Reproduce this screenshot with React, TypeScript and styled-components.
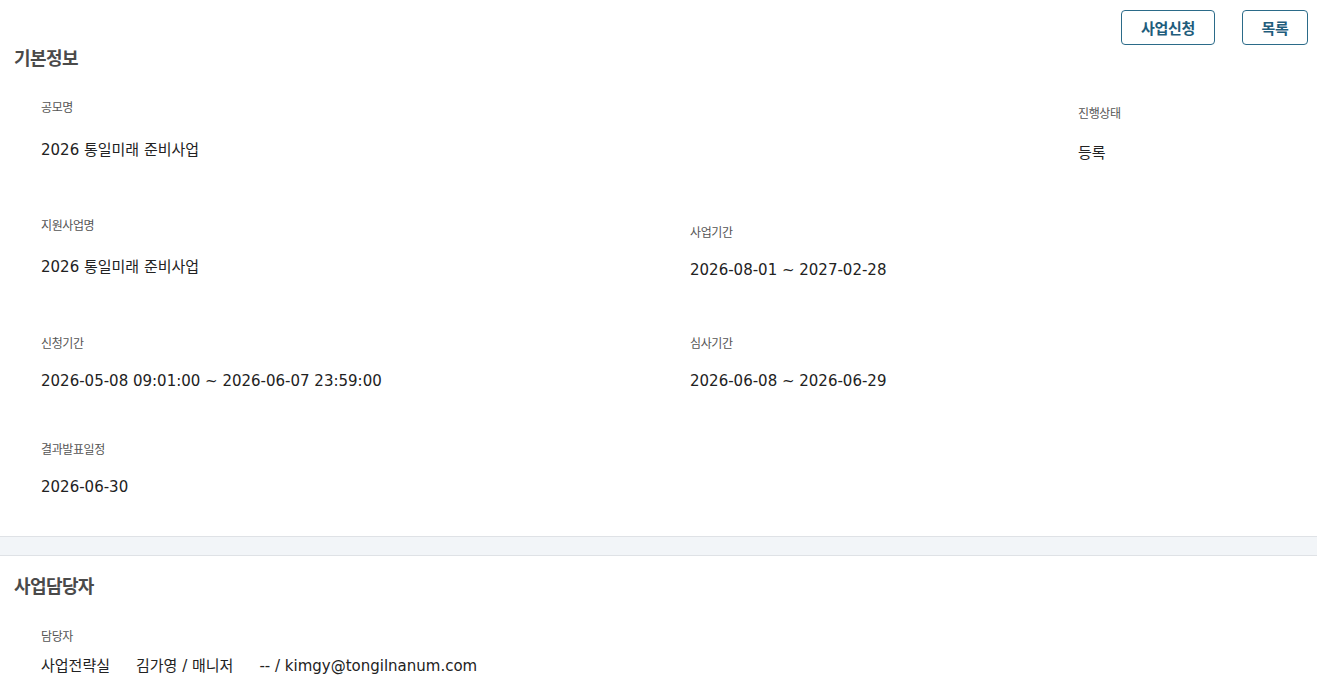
import React from "react";
import styled, { createGlobalStyle } from "styled-components";

const GlobalStyle = createGlobalStyle`
  html, body { margin: 0; padding: 0; background: #ffffff; }
  body {
    font-family: "Noto Sans CJK KR", "Noto Sans", "Liberation Sans", sans-serif;
    color: #222222;
  }
  * { box-sizing: border-box; }
`;

const Page = styled.div`
  width: 1317px;
  background: #ffffff;
`;

const Toolbar = styled.div`
  display: flex;
  justify-content: flex-end;
  gap: 27px;
  padding: 10px 9px 0 0;
`;

const OutlineButton = styled.button<{ $w: number }>`
  width: ${(p) => p.$w}px;
  height: 35px;
  border: 1px solid #2b6b89;
  border-radius: 4px;
  background: #ffffff;
  color: #1f5d7c;
  font-family: "Noto Sans CJK KR", sans-serif;
  font-size: 15px;
  font-weight: 700;
  letter-spacing: -0.3px;
  padding: 0;
  cursor: pointer;
`;

const SectionTitle = styled.h2<{ $mt: number }>`
  margin: ${(p) => p.$mt}px 0 0 14px;
  font-size: 18px;
  line-height: 24px;
  font-weight: 700;
  color: #4a4a4a;
  letter-spacing: -0.6px;
`;

const InfoRow = styled.div<{ $h: number; $cols: string }>`
  display: grid;
  grid-template-columns: ${(p) => p.$cols};
  height: ${(p) => p.$h}px;
  padding-left: 14px;
`;

const Field = styled.div<{ $pt: number }>`
  display: flex;
  flex-direction: column;
  padding: ${(p) => p.$pt}px 0 0 27px;
`;

const Label = styled.div<{ $gap: number }>`
  font-size: 12px;
  line-height: 16px;
  color: #555555;
  letter-spacing: -0.4px;
  margin-bottom: ${(p) => p.$gap}px;
`;

const Value = styled.div`
  font-family: "DejaVu Sans", "Noto Sans CJK KR", sans-serif;
  font-size: 15px;
  line-height: 22px;
  color: #222222;
  display: flex;
  gap: 26px;
  white-space: nowrap;
`;

const Divider = styled.div`
  height: 20px;
  background: #f2f5f8;
  border-top: 1px solid #dfe2e6;
  border-bottom: 1px solid #dfe2e6;
`;

type FieldProps = { label: string; pt: number; gap: number; children: React.ReactNode };

const InfoField = ({ label, pt, gap, children }: FieldProps) => (
  <Field $pt={pt}>
    <Label $gap={gap}>{label}</Label>
    <Value>{children}</Value>
  </Field>
);

export default function App() {
  return (
    <Page>
      <GlobalStyle />
      <Toolbar>
        <OutlineButton $w={94}>사업신청</OutlineButton>
        <OutlineButton $w={66}>목록</OutlineButton>
      </Toolbar>
      <SectionTitle $mt={0}>기본정보</SectionTitle>

      <InfoRow $h={131} $cols="1037px 1fr">
        <InfoField label="공모명" pt={30} gap={24}>2026 통일미래 준비사업</InfoField>
        <InfoField label="진행상태" pt={36} gap={21}>등록</InfoField>
      </InfoRow>
      <InfoRow $h={118} $cols="649px 1fr">
        <InfoField label="지원사업명" pt={17} gap={23}>2026 통일미래 준비사업</InfoField>
        <InfoField label="사업기간" pt={24} gap={19}>2026-08-01 ~ 2027-02-28</InfoField>
      </InfoRow>
      <InfoRow $h={107} $cols="649px 1fr">
        <InfoField label="신청기간" pt={17} gap={19}>2026-05-08 09:01:00 ~ 2026-06-07 23:59:00</InfoField>
        <InfoField label="심사기간" pt={17} gap={19}>2026-06-08 ~ 2026-06-29</InfoField>
      </InfoRow>
      <InfoRow $h={111} $cols="649px 1fr">
        <InfoField label="결과발표일정" pt={16} gap={19}>2026-06-30</InfoField>
      </InfoRow>

      <Divider />

      <SectionTitle $mt={17}>사업담당자</SectionTitle>
      <InfoRow $h={120} $cols="1fr">
        <InfoField label="담당자" pt={31} gap={11}>
          <span>사업전략실</span>
          <span>김가영 / 매니저</span>
          <span>-- / kimgy@tongilnanum.com</span>
        </InfoField>
      </InfoRow>
    </Page>
  );
}
